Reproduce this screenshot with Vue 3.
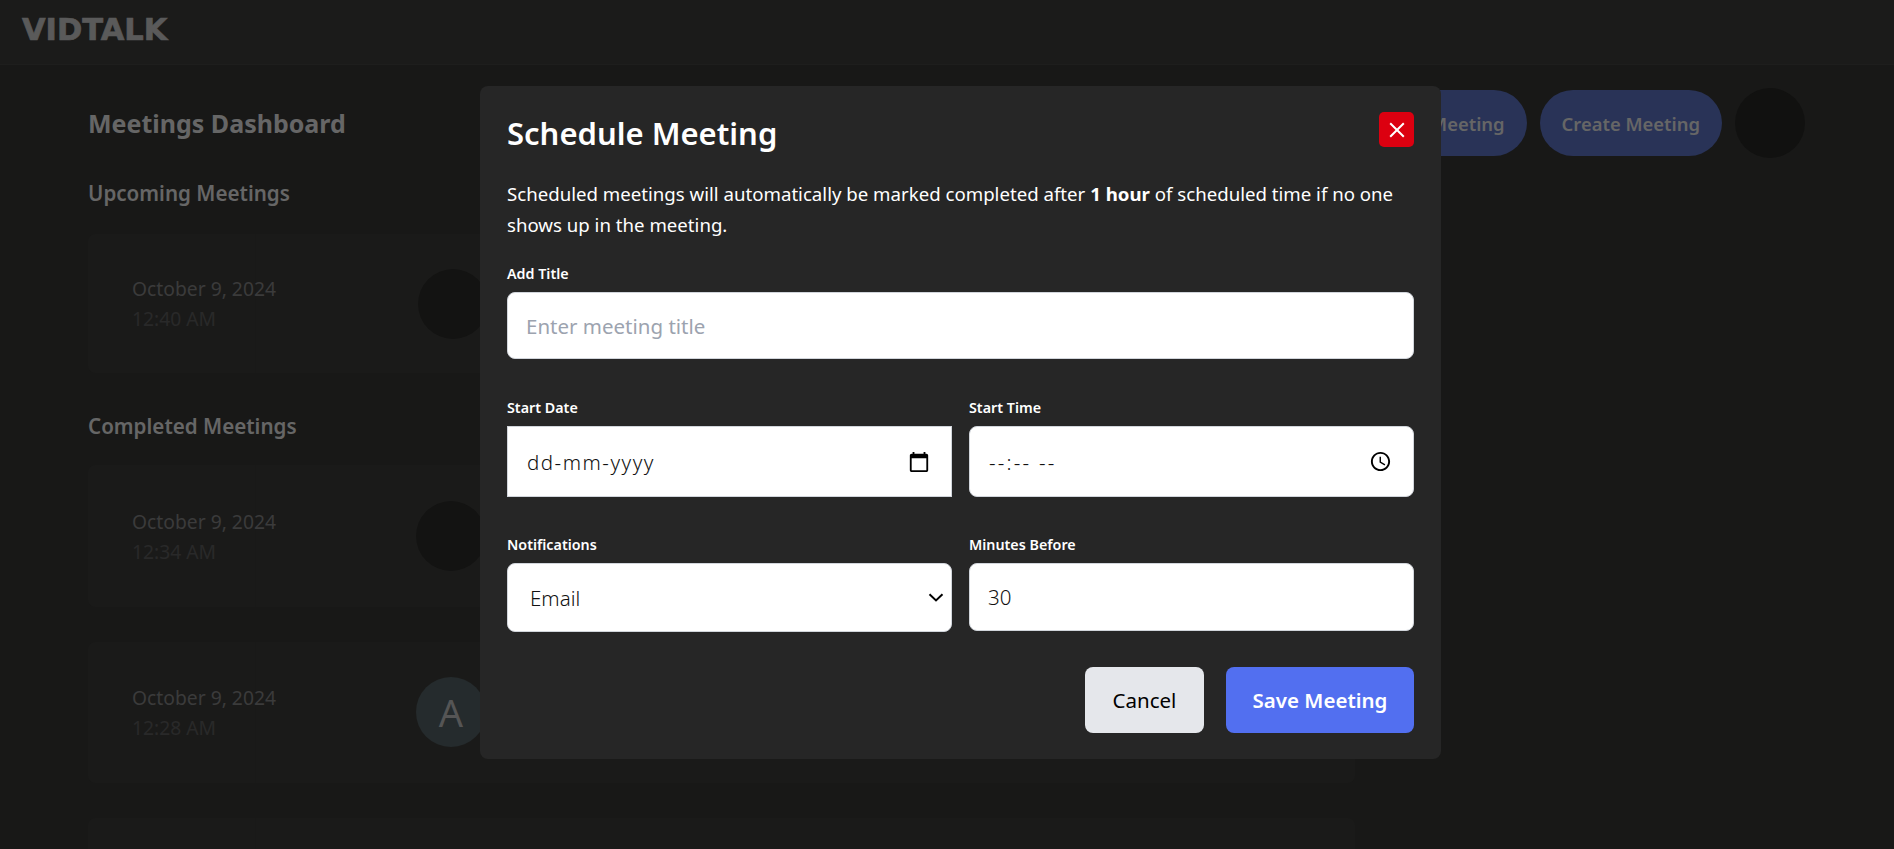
<template>
  <div class="page">
    <header class="topbar">
      <span class="logo">VIDTALK</span>
    </header>

    <main class="dashboard">
      <div class="dash-head">
        <h1>Meetings Dashboard</h1>
        <div class="dash-actions">
          <button class="pill">Join Meeting</button>
          <button class="pill">Create Meeting</button>
          <div class="me"></div>
        </div>
      </div>

      <section v-for="group in groups" :key="group.title" class="group" :class="group.kind">
        <h2>{{ group.title }}</h2>
        <div v-for="(m, i) in group.items" :key="i" class="card">
          <div class="when">
            <div class="date">{{ m.date }}</div>
            <div class="time">{{ m.time }}</div>
          </div>
          <div class="avatar" :class="{ lit: m.initial }">{{ m.initial }}</div>
        </div>
      </section>
    </main>

    <div class="overlay">
      <div class="modal">
        <div class="modal-head">
          <h3>Schedule Meeting</h3>
          <button class="close" aria-label="Close">
            <svg width="16" height="16" viewBox="0 0 16 16" fill="none" stroke="#fff" stroke-width="2">
              <path d="M1.2 1.2l13.6 13.6M14.8 1.2L1.2 14.8" />
            </svg>
          </button>
        </div>
        <p class="note">
          Scheduled meetings will automatically be marked completed after <b>1 hour</b> of scheduled time if no one shows up in the meeting.
        </p>

        <label class="field-label first">Add Title</label>
        <input class="field title-input" type="text" placeholder="Enter meeting title" />

        <div class="two-col row-a">
          <div>
            <label class="field-label">Start Date</label>
            <div class="field fake square">
              <span class="fake-date">dd-mm-yyyy</span>
              <svg width="22" height="22" viewBox="0 0 24 24" fill="#000">
                <path d="M20 3h-1V1h-2v2H7V1H5v2H4c-1.1 0-2 .9-2 2v16c0 1.1.9 2 2 2h16c1.1 0 2-.9 2-2V5c0-1.1-.9-2-2-2zm0 18H4V8h16v13z" />
              </svg>
            </div>
          </div>
          <div>
            <label class="field-label">Start Time</label>
            <div class="field fake">
              <span class="fake-time">--:--  --</span>
              <svg width="23" height="23" viewBox="0 0 24 24" fill="#000">
                <path d="M11.99 2C6.47 2 2 6.48 2 12s4.47 10 9.99 10C17.52 22 22 17.52 22 12S17.52 2 11.99 2zM12 20c-4.42 0-8-3.58-8-8s3.58-8 8-8 8 3.58 8 8-3.58 8-8 8zm.5-13H11v6l5.25 3.15.75-1.23-4.5-2.67z" />
              </svg>
            </div>
          </div>
        </div>

        <div class="two-col row-b">
          <div>
            <label class="field-label">Notifications</label>
            <div class="field fake select">
              <span>Email</span>
              <svg width="16" height="9" viewBox="0 0 16 9" fill="none" stroke="#000" stroke-width="2">
                <path d="M1.5 1.2L8 7.4l6.5-6.2" />
              </svg>
            </div>
          </div>
          <div>
            <label class="field-label">Minutes Before</label>
            <input class="field minutes" type="text" value="30" />
          </div>
        </div>

        <div class="actions">
          <button class="btn cancel">Cancel</button>
          <button class="btn save">Save Meeting</button>
        </div>
      </div>
    </div>
  </div>
</template>

<script setup>
const groups = [
  {
    kind: 'upcoming',
    title: 'Upcoming Meetings',
    items: [{ date: 'October 9, 2024', time: '12:40 AM', initial: '' }]
  },
  {
    kind: 'completed',
    title: 'Completed Meetings',
    items: [
      { date: 'October 9, 2024', time: '12:34 AM', initial: '' },
      { date: 'October 9, 2024', time: '12:28 AM', initial: 'A' },
      { date: '', time: '', initial: '' }
    ]
  }
]
</script>

<style>
html, body {
  margin: 0;
  height: 100%;
  overflow: hidden;
  background: #30302e;
}
</style>

<style scoped>
* {
  box-sizing: border-box;
}

.page {
  position: relative;
  height: 849px;
  overflow: hidden;
  font-family: "Noto Sans", sans-serif;
  color: #ccc;
  background: #30302e;
}

.topbar {
  height: 65px;
  padding: 0 22px 6px;
  display: flex;
  align-items: center;
  background: #363634;
  border-bottom: 1px solid #3c3c3a;
}

.logo {
  font-family: "DejaVu Sans", sans-serif;
  font-weight: 700;
  font-size: 30.5px;
  color: #b4b4b4;
  -webkit-text-stroke: 0.7px #b4b4b4;
}

.dashboard {
  padding: 23px 89px 0 88px;
}

.dash-head {
  display: flex;
  justify-content: space-between;
  align-items: center;
  height: 70px;
}

.dash-head h1 {
  margin: 0;
  font-size: 25px;
  font-weight: 700;
}

.dash-actions {
  display: flex;
  align-items: center;
  gap: 13px;
}

.pill {
  height: 66px;
  padding: 0 22px;
  border: none;
  border-radius: 33px;
  font-family: inherit;
  font-size: 18.4px;
  font-weight: 600;
  color: #ccc;
  background: #5266ae;
}

.me {
  width: 70px;
  height: 70px;
  border-radius: 50%;
  background: #222220;
}

.group {
  margin-top: 21px;
}

.group + .group {
  margin-top: 39px;
}

.group h2 {
  margin: 0 0 25px;
  font-size: 20.6px;
  line-height: 28px;
  font-weight: 600;
}

.upcoming h2 {
  margin-bottom: 27px;
}

.card {
  width: 1267px;
  height: 141.5px;
  display: flex;
  align-items: center;
  gap: 160px;
  border-radius: 8px;
  background: #353533;
}

.card + .card {
  margin-top: 35px;
}

.upcoming .card {
  height: 139px;
}

.upcoming .avatar {
  margin-left: 2px;
}

.when {
  width: 168px;
  height: 100%;
  padding-left: 44px;
  display: flex;
  flex-direction: column;
  justify-content: center;
  border-right: 1px solid #323230;
  white-space: nowrap;
  font-size: 19.3px;
  line-height: 30px;
}

.completed .when {
  padding-top: 2px;
}

.date {
  color: #767676;
}

.time {
  color: #525252;
}

.avatar {
  width: 70px;
  height: 70px;
  border-radius: 50%;
  display: flex;
  align-items: center;
  justify-content: center;
  font-size: 38px;
  color: #ababab;
  background: #262624;
}

.avatar.lit {
  background: #4a565a;
}

.overlay {
  position: absolute;
  inset: 0;
  background: rgba(0, 0, 0, 0.5);
}

.modal {
  position: absolute;
  left: 480px;
  top: 86px;
  width: 961px;
  height: 673px;
  padding: 26px 27px;
  border-radius: 8px;
  color: #fff;
  background: #262626;
}

.modal-head {
  display: flex;
  justify-content: space-between;
  align-items: flex-start;
  height: 66px;
}

.modal-head h3 {
  margin: 0;
  font-size: 31px;
  line-height: 42px;
  font-weight: 600;
}

.close {
  width: 35px;
  height: 35px;
  padding: 0;
  border: none;
  border-radius: 5px;
  display: flex;
  align-items: center;
  justify-content: center;
  background: #dc0010;
}

.note {
  margin: 0;
  font-size: 18.65px;
  line-height: 31px;
}

.note b {
  font-weight: 700;
}

.field-label {
  display: block;
  height: 28px;
  font-size: 14.3px;
  line-height: 20px;
  font-weight: 600;
}

.field-label.first {
  margin-top: 24px;
}

.field {
  display: flex;
  align-items: center;
  width: 100%;
  border: 1px solid #d1d5db;
  border-radius: 8px;
  font-family: inherit;
  font-size: 20.5px;
  font-weight: 300;
  color: #111;
  background: #fff;
  outline: none;
}

.title-input {
  height: 67px;
  padding: 0 18px;
  font-weight: 400;
}

.title-input::placeholder {
  color: #9ca3af;
}

.two-col {
  display: grid;
  grid-template-columns: 445px 445px;
  column-gap: 17px;
}

.row-a {
  margin-top: 39px;
}

.row-b {
  margin-top: 38px;
}

.fake {
  height: 71px;
  justify-content: space-between;
  padding: 0 21px 0 19px;
}

.square {
  border-radius: 0;
}

.fake-date {
  letter-spacing: 1.5px;
}

.fake-time {
  white-space: pre;
  letter-spacing: 2.2px;
}

.select {
  height: 69px;
  padding: 0 7px 0 22px;
}

.minutes {
  height: 68px;
  padding: 0 18px;
}

.actions {
  display: flex;
  justify-content: flex-end;
  gap: 22px;
  margin-top: 35px;
}

.btn {
  height: 66px;
  border: none;
  border-radius: 8px;
  font-family: inherit;
  font-size: 20.5px;
}

.cancel {
  width: 119px;
  color: #000;
  font-weight: 400;
  background: #e5e7eb;
}

.save {
  width: 188px;
  color: #fff;
  font-weight: 600;
  background: #526ff0;
}
</style>
